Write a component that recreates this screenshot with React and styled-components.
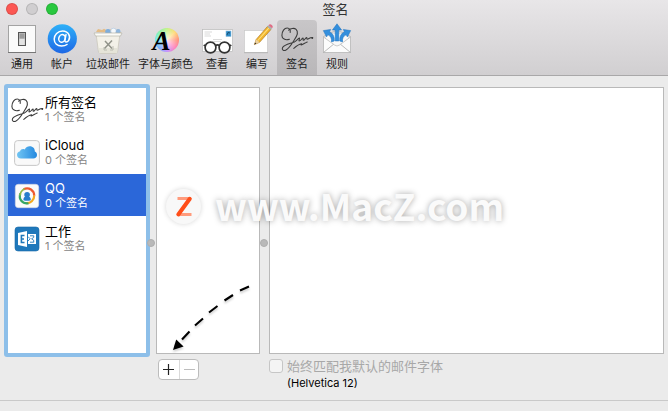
import React from "react";
import styled, { createGlobalStyle, css } from "styled-components";

const accounts = [
  { name: "所有签名", count: "1 个签名", icon: "signature" },
  { name: "iCloud", count: "0 个签名", icon: "cloud" },
  { name: "QQ", count: "0 个签名", icon: "qq", selected: true },
  { name: "工作", count: "1 个签名", icon: "exchange" },
];

const tabs = [
  { label: "通用", width: 40, icon: "general" },
  { label: "帐户", width: 40, icon: "at" },
  { label: "垃圾邮件", width: 52, icon: "junk" },
  { label: "字体与颜色", width: 63, icon: "fonts" },
  { label: "查看", width: 40, icon: "viewing" },
  { label: "编写", width: 40, icon: "composing" },
  { label: "签名", width: 40, icon: "signature", active: true },
  { label: "规则", width: 40, icon: "rules" },
];

const Signature = () => (
  <svg width="34" height="28" viewBox="0 0 34 28" fill="none" stroke="#3c3c3c" strokeWidth="1.1" strokeLinecap="round" strokeLinejoin="round">
    <path d="M9.4 14.2C5.4 15.6 1.9 13.8 1.9 10.4C1.9 6.2 4.4 3 7.2 3C9.6 3 10.6 5 10.2 7.4M8.6 5.2C10.6 3.4 14.2 2.7 16.1 4.4C18.4 6.6 17 11 14.4 14.8C11.8 18.9 9.2 23.4 6 25.1C3.6 26.3 1.5 24.7 2.6 22.5C4.4 19.2 10.4 18.6 14.4 16.9C16.8 15.8 17.4 13.8 19.4 13C20.2 13.6 18.2 15.4 19.2 16C20.8 16 21.6 13.4 23 13.1C23.8 13.5 22.4 15 23.4 15.3C24.8 15.2 25.2 12.8 26.6 12.6C27.4 12.9 26.4 14.2 27.4 14.3C28.8 14.2 29.8 12.1 32.6 12.5C33 12.9 32.5 13.4 32 13.5" />
    <path d="M13.8 23.3C16.4 21 19.6 19 21.6 18.7C21.8 19.2 20.8 19.7 21.2 20C22.8 19.5 24.9 18 27.2 17" />
  </svg>
);

const General = () => (
  <svg width="30" height="30" viewBox="0 0 30 30">
    <rect x="1.5" y="1.5" width="27" height="27" fill="#fafafa" stroke="#a3a3a3" />
    <path d="M1 28.5H29" stroke="#777" />
    <rect x="11.5" y="8.5" width="7" height="13" fill="#c4c4c4" stroke="#555" />
    <rect x="12.5" y="9.5" width="5" height="5" fill="#9b9b9b" />
    <rect x="12.5" y="15" width="5" height="6" fill="#e3e3e3" />
  </svg>
);

const AtSign = () => (
  <svg width="30" height="30" viewBox="0 0 30 30">
    <defs>
      <linearGradient id="at" x1="0" y1="0" x2="0" y2="1">
        <stop offset="0" stopColor="#2eb0f8" />
        <stop offset="1" stopColor="#1e67e5" />
      </linearGradient>
    </defs>
    <circle cx="15.3" cy="14.8" r="14.6" fill="url(#at)" />
    <g fill="none" stroke="#fff" strokeWidth="1.5" strokeLinecap="round">
      <ellipse cx="15" cy="14.4" rx="3.2" ry="3.9" transform="rotate(18 15 14.4)" />
      <path d="M19 10.6L17.9 16.1C17.5 18.8 20.4 18.5 21.7 16.4C24 12.5 21.3 7 15.7 7C10.7 7 7.2 10.8 7.2 15.1C7.2 19.5 10.4 22 14.5 22C16.6 22 18.6 21.5 20 20.5" />
    </g>
  </svg>
);

const Junk = () => (
  <svg width="30" height="30" viewBox="0 0 30 30">
    <path d="M3 8L5 5L9 6L11 4.7L15 7L18 5L22 7L25 5L28 9Z" fill="#e4bc85" />
    <circle cx="15" cy="7.8" r="2.8" fill="#7eaedc" />
    <circle cx="20.5" cy="7" r="2.8" fill="#f5f9fc" stroke="#a7c2dc" strokeWidth=".6" />
    <circle cx="25.2" cy="7.4" r="2.3" fill="#8eb7df" />
    <path d="M3 9.5L5.5 28Q6 29.5 8 29.5H22Q24 29.5 24.5 28L27 9.5Z" fill="#f3f1e8" stroke="#c7c4b8" strokeWidth=".7" />
    <path d="M5.5 24H24.6L24 29H6.2Z" fill="#e5e4d8" />
    <path d="M1 9H29L27.5 12H2.5Z" fill="#fcfcf8" stroke="#b6b4a9" strokeWidth=".7" />
    <path d="M12 17L19 24.5M19 16.5L11.5 24.5" stroke="#92948a" strokeWidth="1.5" />
    <path d="M11 23V26H14M20 22V26H17" fill="none" stroke="#b1b2a8" strokeWidth=".8" />
  </svg>
);

const FontColors = () => (
  <Wheel>
    <WheelLetter>A</WheelLetter>
  </Wheel>
);

const Viewing = () => (
  <svg width="32" height="30" viewBox="0 0 32 30">
    <rect x="1.5" y="5.5" width="30" height="22" fill="#fff" stroke="#b9b9b9" strokeWidth=".7" />
    <path d="M3.5 8H11M3.5 10H9M3.5 12H10" stroke="#c9c9c9" strokeWidth=".7" />
    <path d="M12 15.5H21M11 17.5H20" stroke="#ccc" strokeWidth=".7" />
    <rect x="25" y="7" width="5" height="5.5" fill="#2c8ac6" stroke="#8ebcdc" strokeWidth=".6" />
    <path d="M26 11L27 8.5L29 9" stroke="#17415e" strokeWidth=".8" fill="none" />
    <g fill="#fff" fillOpacity=".65" stroke="#333" strokeWidth="1.7">
      <circle cx="9.5" cy="23.5" r="5.4" />
      <circle cx="23.5" cy="23.5" r="5.4" />
      <path d="M14.5 22Q16.5 20 18.5 22M4 22L2.8 20.8M29 22L30.2 20.8" fill="none" />
    </g>
  </svg>
);

const Composing = () => (
  <svg width="32" height="32" viewBox="0 0 32 32">
    <rect x="3.5" y="7.5" width="23" height="22" fill="#fff" stroke="#cacaca" strokeWidth=".7" />
    <path d="M3 29.7H27" stroke="#b4b4b4" />
    <path d="M13.4 21.6L15.2 16.4L26.5 3.4L30 6.4L18.6 19.3Z" fill="#f1b62e" stroke="#a86d16" strokeWidth=".6" />
    <path d="M16.8 17.5L28 4.8" stroke="#ffe07c" strokeWidth="1.1" />
    <path d="M13.4 21.6L15.2 16.4L18.6 19.3Z" fill="#ead0a0" />
    <path d="M13.4 21.6L14.1 19.4L15.4 20.5Z" fill="#222" />
    <path d="M26.2 3.8L27.6 2.3L31 5.2L29.7 6.8Z" fill="#a9b0ad" />
    <path d="M27.5 2.2Q29 .5 31 2.2Q32.5 3.8 31 5.2Z" fill="#df6c84" />
  </svg>
);

const Rules = () => (
  <svg width="30" height="32" viewBox="0 0 30 32">
    <path d="M1.5 13.5L15 7L28.5 13.5V29.5H1.5Z" fill="#e1e1e1" stroke="#b0b0b0" strokeWidth=".7" />
    <path d="M4 11H26V24H4Z" fill="#f9f9f9" />
    <g fill="#338fdd" stroke="#2373bd" strokeWidth=".5">
      <path d="M13.2 18V7H10.4L15 .8L19.6 7H16.8V18Z" />
      <path d="M9.5 19Q10 13.5 5.8 11.8L4.6 14L1.3 7.6L8.7 6.4L7.6 8.8Q12.6 11 12.3 18Z" />
      <path d="M20.5 19Q20 13.5 24.2 11.8L25.4 14L28.7 7.6L21.3 6.4L22.4 8.8Q17.4 11 17.7 18Z" />
    </g>
    <path d="M1.5 14L12.5 22Q15 24 17.5 22L28.5 14V29.5H1.5Z" fill="#fcfcfc" stroke="#b5b5b5" strokeWidth=".7" />
    <path d="M1.5 29.5L11.5 21.3M28.5 29.5L18.5 21.3" stroke="#aaa" strokeWidth=".8" />
  </svg>
);

const Cloud = () => (
  <svg width="26" height="26" viewBox="0 0 26 26">
    <defs>
      <linearGradient id="cloud" x1="0" y1="0" x2="1" y2="0">
        <stop offset="0" stopColor="#71c5f3" />
        <stop offset="1" stopColor="#2388df" />
      </linearGradient>
    </defs>
    <rect x=".6" y=".6" width="24.8" height="24.8" rx="3" fill="#f9f9f9" stroke="#c7c7c7" />
    <path d="M7 18.5C4.5 18.5 3 16.9 3 14.8C3 12.8 4.3 11.5 6.1 11.2C6.5 9.1 9 8.3 10.7 9.4C11.8 7.2 13.6 6.2 15.7 6.2C19 6.2 21 8.5 20.8 11.6C22.2 12 23 13.3 23 15C23 17 21.4 18.5 19.3 18.5Z" fill="url(#cloud)" />
  </svg>
);

const QQ = () => (
  <svg width="26" height="26" viewBox="0 0 26 26">
    <rect x="1.3" y="1.3" width="23.4" height="23.4" rx="3" fill="#fbfbfa" stroke="#d3d7df" strokeWidth=".6" />
    <g fill="none" strokeWidth="2.2">
      <path d="M9.6 6.2C15 3.6 20.3 7.5 20.2 12.7" stroke="#ee5930" />
      <path d="M20.2 12.4C20.3 17.3 16.5 20.5 12 20.2" stroke="#f5a91e" />
      <path d="M14.5 20.3C8.2 21.2 4.4 16 6.3 10.4" stroke="#36a666" />
      <path d="M6 12.5C6.2 9.3 7.6 7.5 10.6 5.8" stroke="#94bd49" strokeWidth="1.7" />
    </g>
    <circle cx="13.1" cy="11.7" r="2.8" fill="#287dcc" />
    <path d="M9.4 17.2Q9.2 13.2 13.1 13.2Q17 13.2 16.8 17.2Q13.1 18.2 9.4 17.2Z" fill="#287dcc" />
  </svg>
);

const Exchange = () => (
  <svg width="26" height="26" viewBox="0 0 26 26">
    <rect x="1" y="1" width="24" height="24" rx="3" fill="#1f78bb" stroke="#176aa8" strokeWidth=".6" />
    <path d="M4 7L13 5V21L4 19Z" fill="#fff" />
    <path d="M10.5 9.5H7.4V16.5H10.5M7.4 13H10" stroke="#1f78bb" strokeWidth="1.6" fill="none" />
    <rect x="14" y="8" width="8" height="10" fill="#fff" />
    <path d="M14 10.6L16.2 12.8L14 15M16 9.8H19.8Q20.6 11.8 17.6 12.8Q20.6 13.8 19.8 16.2H16" fill="none" stroke="#1f78bb" strokeWidth=".9" />
  </svg>
);

const icons = {
  general: General,
  at: AtSign,
  junk: Junk,
  fonts: FontColors,
  viewing: Viewing,
  composing: Composing,
  signature: Signature,
  rules: Rules,
  cloud: Cloud,
  qq: QQ,
  exchange: Exchange,
};

export default function App() {
  return (
    <Window>
      <GlobalStyle />
      <Header>
        <TitleBar>
          <Lights>
            <Light color="#fc5753" />
            <Light color="#d0ced0" />
            <Light color="#29c83f" />
          </Lights>
          <Title>签名</Title>
        </TitleBar>
        <Toolbar>
          {tabs.map((tab) => {
            const Icon = icons[tab.icon];
            return (
              <Tab key={tab.label} $width={tab.width} $active={tab.active}>
                <TabIcon>
                  <Icon />
                </TabIcon>
                <TabLabel>{tab.label}</TabLabel>
              </Tab>
            );
          })}
        </Toolbar>
      </Header>
      <Content>
        <AccountList>
          {accounts.map((account) => {
            const Icon = icons[account.icon];
            return (
              <Account key={account.name} $selected={account.selected}>
                <AccountIcon>
                  <Icon />
                </AccountIcon>
                <AccountText>
                  <AccountName>{account.name}</AccountName>
                  <AccountCount $selected={account.selected}>{account.count}</AccountCount>
                </AccountText>
              </Account>
            );
          })}
        </AccountList>
        <Splitter $width={6} $shift={-2} />
        <Column $width={104}>
          <Panel />
          <Segmented>
            <Segment>
              <svg width="20" height="19" viewBox="0 0 20 19">
                <path d="M4 9.5H15M9.5 4V15" stroke="#222" strokeWidth="1.2" />
              </svg>
            </Segment>
            <Segment $disabled>
              <svg width="20" height="19" viewBox="0 0 20 19">
                <path d="M4 9.5H15" stroke="#bdbdbd" />
              </svg>
            </Segment>
          </Segmented>
        </Column>
        <Splitter $width={9} $shift={-0.5} />
        <Column $width={395}>
          <Panel />
          <FontOption>
            <Checkbox />
            <div>
              <OptionLabel>始终匹配我默认的邮件字体</OptionLabel>
              <FontName>(Helvetica 12)</FontName>
            </div>
          </FontOption>
        </Column>
      </Content>
      <Footer />
      <Arrow width="90" height="75" viewBox="0 0 90 75">
        <g fill="none" stroke="#000" strokeWidth="2.1">
          <path d="M80 6.5L71 10.5M64 15L55.5 20.5M48.5 26L40 32.5M34 38.5L26 45.5M20.5 51.5L13 59.5" />
        </g>
        <path d="M4 70L7.2 59.5L14.6 66.5Z" />
      </Arrow>
      <Watermark>
        <Badge>
          <svg width="36" height="36" viewBox="0 0 36 36">
            <path d="M11.5 9.5H25M11.5 25.5H25.5" stroke="#ff9b7d" strokeWidth="3" />
            <path d="M23.8 9.8L12.3 25.5" stroke="#ff4e19" strokeWidth="4" strokeLinecap="round" />
          </svg>
        </Badge>
        <WatermarkText>www.MacZ.com</WatermarkText>
      </Watermark>
    </Window>
  );
}

const GlobalStyle = createGlobalStyle`
  body {
    margin: 0;
  }

  * {
    box-sizing: border-box;
  }

  svg {
    display: block;
    flex-shrink: 0;
  }
`;

const Window = styled.div`
  position: relative;
  width: 668px;
  height: 411px;
  overflow: hidden;
  background: #ebebeb;
  color: #000;
  font-family: Inter, "Noto Sans CJK SC", sans-serif;
  white-space: nowrap;
`;

const Header = styled.header`
  height: 76px;
  background: linear-gradient(#e8e6e8, #d1cfd1);
  border-bottom: 1px solid #a9a8a9;
`;

const TitleBar = styled.div`
  display: flex;
  height: 20px;
`;

const Lights = styled.div`
  display: flex;
  gap: 8px;
  padding: 3px 0 0 6px;
  width: 66px;
`;

const Light = styled.span`
  width: 12px;
  height: 12px;
  border-radius: 50%;
  background: ${(props) => props.color};
  border: 1px solid rgba(0, 0, 0, 0.12);
`;

const Title = styled.div`
  flex: 1;
  padding-right: 63px;
  text-align: center;
  font-size: 13px;
  line-height: 18px;
  color: #333;
`;

const Toolbar = styled.nav`
  display: flex;
  height: 55px;
  padding-left: 2px;
`;

const Tab = styled.div`
  width: ${(props) => props.$width}px;
  height: 55px;
  border-radius: 4px 4px 0 0;
  text-align: center;

  ${(props) =>
    props.$active &&
    css`
      background: linear-gradient(#c8c6c8, #b9b7b9);
    `}
`;

const TabIcon = styled.div`
  display: flex;
  align-items: center;
  justify-content: center;
  height: 36px;
  padding-top: 2px;
`;

const TabLabel = styled.div`
  font-size: 11px;
  line-height: 16px;
  color: #222;
`;

const Wheel = styled.div`
  position: relative;
  width: 24px;
  height: 24px;
  margin: 2px 0 0 2px;
  border-radius: 50%;
  background: radial-gradient(circle, rgba(255, 255, 255, 0.8), rgba(255, 255, 255, 0.1) 75%),
    conic-gradient(#b8f26e, #ffd45d, #ff795f, #ff69ae, #b77bff, #5c9dff, #59e5ea, #6ef09a, #b8f26e);
`;

const WheelLetter = styled.span`
  position: absolute;
  left: -2px;
  top: 0;
  font: italic bold 27px/27px "Liberation Serif", serif;
  color: #000;
`;

const Content = styled.main`
  display: flex;
  align-items: flex-start;
  height: 324px;
  padding: 8px 0 0 4px;
`;

const AccountList = styled.div`
  width: 146px;
  height: 273px;
  border: 4px solid #8dbfe9;
  border-radius: 3px;
  background: #fff;
`;

const Account = styled.div`
  display: flex;
  height: 42px;
  margin-bottom: 1px;
  ${(props) =>
    props.$selected &&
    css`
      background: #2b67d9;
      color: #fff;
    `}
`;

const AccountIcon = styled.div`
  display: flex;
  align-items: center;
  justify-content: center;
  width: 37px;
  padding-top: 1px;
`;

const AccountText = styled.div`
  padding-top: 6px;
`;

const AccountName = styled.div`
  font-size: 13px;
  line-height: 16px;
`;

const AccountCount = styled.div`
  font-size: 11px;
  line-height: 14px;
  color: ${(props) => (props.$selected ? "#fff" : "#858585")};
`;

const Splitter = styled.div`
  position: relative;
  width: ${(props) => props.$width}px;
  height: 270px;

  &::after {
    content: "";
    position: absolute;
    left: calc(50% - 4px + ${(props) => props.$shift}px);
    top: 155px;
    width: 6px;
    height: 6px;
    border-radius: 50%;
    background: #b9b9b9;
    border: 1px solid #aeaeae;
  }
`;

const Column = styled.div`
  width: ${(props) => props.$width}px;
  padding-top: 3px;
`;

const Panel = styled.div`
  height: 267px;
  background: #fff;
  border: 1px solid #b9b9b9;
`;

const Segmented = styled.div`
  display: flex;
  width: 41px;
  height: 21px;
  margin: 5px 0 0 2px;
  background: #fff;
  border: 1px solid #bcbcbc;
  border-radius: 4px;
`;

const Segment = styled.div`
  width: 20px;
  ${(props) =>
    props.$disabled &&
    css`
      border-left: 1px solid #dadada;
    `}
`;

const FontOption = styled.div`
  display: flex;
  gap: 4px;
  padding-top: 5px;
`;

const Checkbox = styled.div`
  width: 14px;
  height: 14px;
  background: #f4f4f4;
  border: 1px solid #c6c6c6;
  border-radius: 3px;
`;

const OptionLabel = styled.div`
  font-size: 13px;
  line-height: 15px;
  color: #a8a8a8;
`;

const FontName = styled.div`
  font-size: 11px;
  line-height: 14px;
  padding-top: 2px;
`;

const Footer = styled.footer`
  height: 11px;
  border-top: 1px solid #c9c9c9;
`;

const Arrow = styled.svg`
  position: absolute;
  left: 169px;
  top: 280px;
  filter: drop-shadow(0 2px 1px rgba(0, 0, 0, 0.2));
`;

const Watermark = styled.div`
  position: absolute;
  left: 166px;
  top: 188px;
  display: flex;
  align-items: center;
  height: 36px;
`;

const Badge = styled.div`
  width: 35px;
  height: 35px;
  border-radius: 50%;
  background: #f8f8f8;
  box-shadow: 0 0 5px rgba(0, 0, 0, 0.16);
`;

const WatermarkText = styled.div`
  margin: -2px 0 0 14px;
  font: bold 37px/36px "Noto Sans CJK SC", sans-serif;
  color: #fafafa;
  text-shadow: 0 0 6px rgba(0, 0, 0, 0.35);
`;
